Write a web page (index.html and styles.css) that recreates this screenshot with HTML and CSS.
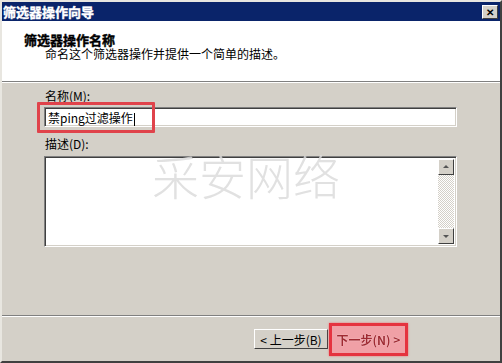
FILE: index.html
```html
<!DOCTYPE html>
<html lang="zh-CN">
	<head>
		<meta charset="utf-8">
		<title>筛选器操作向导</title>
		<link rel="stylesheet" href="styles.css">
	</head>
	<body>
		<div class="window">
			<div class="titlebar">
				<span class="title">筛选器操作向导</span>
				<span class="close">✕</span>
			</div>
			<div class="header">
				<div class="head-title">筛选器操作名称</div>
				<div class="head-sub">命名这个筛选器操作并提供一个简单的描述。</div>
			</div>
			<div class="body">
				<div class="label">名称(M):</div>
				<div class="field">
					<div class="edit">禁ping过滤操作<span class="caret"></span></div>
					<div class="mark"></div>
				</div>
				<div class="label label2">描述(D):</div>
				<div class="memo">
					<div class="memo-text"></div>
					<div class="vscroll">
						<div class="arrow up"></div>
						<div class="track"></div>
						<div class="arrow down"></div>
					</div>
				</div>
			</div>
			<div class="footer">
				<button class="btn">&lt; 上一步(B)</button>
				<div class="next"><span>下一步(N) &gt;</span></div>
			</div>
			<div class="watermark">采安网络</div>
		</div>
	</body>
</html>
```

FILE: styles.css
```css
html, body { margin:0; padding:0; background:#d4d0c8 }
body { font-family: "Noto Sans CJK SC", "Liberation Sans", sans-serif; font-size:12px; color:#000 }

.window { position:relative; width:502px; height:363px; box-sizing:border-box; display:flex; flex-direction:column;
	border:2px solid; border-color:#e8e6e0 #404040 #404040 #e8e6e0; background:#d4d0c8; overflow:hidden }

.titlebar { height:19px; background:#0a246a; display:flex; align-items:center; justify-content:space-between; padding:0 2px 0 1px }
.title { color:#fff; font-weight:bold; font-size:13px; line-height:19px; -webkit-text-stroke:0.4px #fff }
.close { width:14px; height:12px; margin-top:1px; background:#d4d0c8; border:1px solid; border-color:#fff #404040 #404040 #fff;
	font-size:10px; line-height:12px; text-align:center; font-weight:bold; color:#000 }

.header { height:61px; background:#fff; border-bottom:1px solid #808080; box-sizing:border-box; padding-top:12px }
.head-title { font-weight:bold; font-size:13px; line-height:13px; margin-left:22px; -webkit-text-stroke:0.4px #000 }
.head-sub { font-size:12px; line-height:12px; margin:2px 0 0 43px }

.body { flex:1; border-top:1px solid #fff; border-bottom:1px solid #808080; padding:6px 0 0 42px }
.label { line-height:14px; height:14px; margin-left:1px }
.label2 { margin-top:10px }

.field { position:relative; margin-top:4px; width:413px }
.edit { height:20px; box-sizing:border-box; background:#fff; border:1px solid; border-color:#808080 #fff #fff #808080;
	box-shadow: inset 1px 1px #404040, inset -1px -1px #d4d0c8; padding:0 3px; line-height:19px; font-size:12px }
.caret { display:inline-block; width:1px; height:13px; background:#000; vertical-align:middle; margin-left:1px }
.mark { position:absolute; left:-7px; top:-5px; width:118px; height:31px; box-sizing:border-box; border:3px solid #e0434b; border-radius:1px }

.memo { margin-top:5px; width:413px; height:91px; box-sizing:border-box; display:flex; background:#fff; border:1px solid;
	border-color:#808080 #fff #fff #808080; box-shadow: inset 1px 1px #404040, inset -1px -1px #d4d0c8; padding:2px }
.memo-text { flex:1 }
.vscroll { width:16px; display:flex; flex-direction:column }
.track { flex:1; background: repeating-conic-gradient(#d4d0c8 0 25%, #fff 0 50%) 0 0/2px 2px }
.arrow { height:16px; box-sizing:border-box; background:#d4d0c8; border:1px solid; border-color:#fff #404040 #404040 #fff; position:relative }
.arrow::after { content:""; position:absolute; left:4px; border-left:3px solid transparent; border-right:3px solid transparent }
.up::after { top:5px; border-bottom:3px solid #555 }
.down::after { top:6px; border-top:3px solid #555 }

.footer { height:44px; border-top:1px solid #fff; display:flex; align-items:center; padding-left:252px; gap:1px }
.btn { width:74px; height:20px; box-sizing:border-box; background:#d4d0c8; border:1px solid; border-color:#fff #404040 #404040 #fff;
	font-family:inherit; font-size:12px; padding:0; line-height:17px; color:#000 }
.next { width:79px; height:33px; box-sizing:border-box; border:3px solid #e5333f; background:#f0a0a6;
	display:flex; align-items:center; justify-content:center; box-shadow: 0 0 2px #f06a72 }
.next span { color:#a02a32; font-weight:bold; font-size:12px; filter:blur(0.6px); text-shadow: 0 0 1px #fff }

.watermark { position:absolute; left:150px; top:146px; font-size:47px; line-height:54px; color:#dcdcdc; opacity:0.85;
	font-weight:300; pointer-events:none }
```
